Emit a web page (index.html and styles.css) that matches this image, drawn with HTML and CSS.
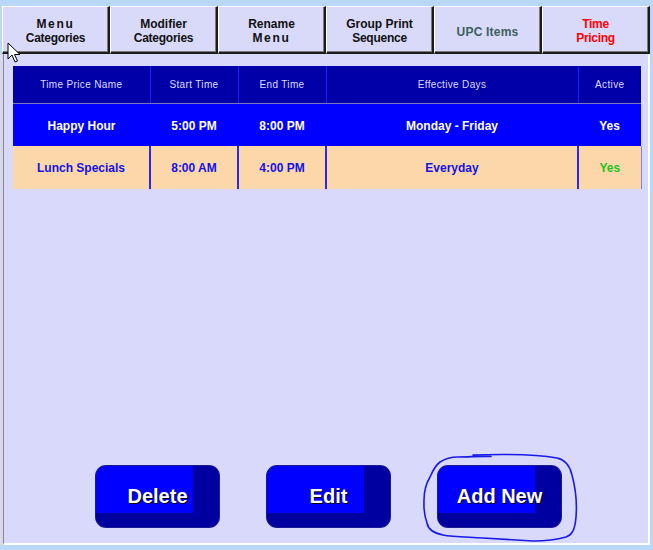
FILE: index.html
```html
<!DOCTYPE html>
<html>
<head>
<meta charset="utf-8">
<link rel="stylesheet" href="styles.css">
</head>
<body>
<div class="app">
  <div class="tabs">
    <div class="tab"><span class="wide">Menu</span><span class="tight">Categories</span></div>
    <div class="tab"><span>Modifier</span><span class="tight">Categories</span></div>
    <div class="tab"><span>Rename</span><span class="wide">Menu</span></div>
    <div class="tab"><span>Group Print</span><span class="tight">Sequence</span></div>
    <div class="tab upc"><span>UPC Items</span></div>
    <div class="tab active"><span>Time</span><span>Pricing</span></div>
  </div>
  <div class="panel-wrap">
    <div class="panel">
      <table class="grid">
        <colgroup>
          <col class="c1"><col class="c2"><col class="c3"><col class="c4"><col class="c5">
        </colgroup>
        <thead>
          <tr>
            <th>Time Price Name</th>
            <th>Start Time</th>
            <th>End Time</th>
            <th>Effective Days</th>
            <th>Active</th>
          </tr>
        </thead>
        <tbody>
          <tr class="sel">
            <td>Happy Hour</td>
            <td>5:00 PM</td>
            <td>8:00 PM</td>
            <td>Monday - Friday</td>
            <td>Yes</td>
          </tr>
          <tr class="norm">
            <td>Lunch Specials</td>
            <td>8:00 AM</td>
            <td>4:00 PM</td>
            <td>Everyday</td>
            <td class="yes">Yes</td>
          </tr>
        </tbody>
      </table>
      <div class="actions">
        <button class="btn">Delete</button>
        <button class="btn">Edit</button>
        <button class="btn">Add New</button>
      </div>
    </div>
  </div>
  <svg class="cursor" width="14" height="22" viewBox="0 0 14 22">
    <path d="M1 1 L1 17 L5 13 L8 20 L10.5 19 L7.5 12.5 L13 12.5 Z" fill="#ffffff" stroke="#000000" stroke-width="1" stroke-linejoin="miter"/>
  </svg>
  <svg class="scribble" width="653" height="550" viewBox="0 0 653 550">
    <path d="M473 455 C 505 454, 540 455, 557 458 C 566 460, 570 466, 572 475 C 576 490, 577 505, 576 517 C 575 530, 572 535, 566 537 C 552 541, 540 541, 533 541 C 515 540, 498 539, 483 538 C 468 537, 453 537, 443 535 C 433 533, 428 529, 427 523 C 423 512, 424 505, 424 500 C 424 490, 427 482, 430 477 C 433 470, 436 465, 440 462 C 446 458, 452 457, 458 457 C 470 457, 480 456, 491 456.5" fill="none" stroke="#1a1ae6" stroke-width="1.6" stroke-linecap="round"/>
  </svg>
</div>
</body>
</html>
```

FILE: styles.css
```css
* { box-sizing: border-box; }
html, body { margin: 0; padding: 0; }
body {
  background: #b9d8f8;
  width: 653px;
  height: 550px;
  overflow: hidden;
  font-family: "Liberation Sans", Arial, sans-serif;
}
.app {
  position: relative;
  width: 653px;
  height: 550px;
  padding-top: 6px;
}
.tabs {
  display: grid;
  grid-template-columns: repeat(6, 108px);
  margin-left: 2px;
  height: 48px;
}
.tab {
  display: flex;
  flex-direction: column;
  align-items: center;
  justify-content: center;
  background: #d9d9f9;
  border-style: solid;
  border-width: 1px 2px 2px 1px;
  border-color: #ffffff #1c1c1c #1c1c1c #ffffff;
  box-shadow: inset -1px -1px 0 #7a7a7a;
  font-size: 12px;
  font-weight: bold;
  line-height: 14px;
  color: #111111;
  padding-top: 3px;
}
.tab .wide { letter-spacing: 1.7px; }
.tab .tight { letter-spacing: -0.25px; }
.tab.upc {
  color: #3b6060;
  letter-spacing: 0.2px;
  padding-top: 4px;
}
.tab.active { color: #ff0000; letter-spacing: -0.3px; }

.panel-wrap {
  background: #d8d8f2;
  padding-left: 3px;
  width: 650px;
  height: 491px;
}
.panel {
  display: flex;
  flex-direction: column;
  width: 647px;
  height: 491px;
  background: #d9d9fb;
  border-left: 1px solid #8a8a80;
  border-right: 2px solid #ffffff;
  border-bottom: 2px solid #ffffff;
  padding: 12px 0 16px 9px;
}
.grid {
  border-collapse: collapse;
  table-layout: fixed;
  width: 628px;
}
.c1 { width: 137px; }
.c2 { width: 88px; }
.c3 { width: 88px; }
.c4 { width: 252px; }
.c5 { width: 63px; }
.grid th {
  height: 37px;
  background: #0000a8;
  color: #dcdcff;
  font-size: 10px;
  font-weight: normal;
  letter-spacing: 0.35px;
  text-align: center;
  padding: 0;
  border-left: 1px solid #1c1cff;
  border-bottom: 1px solid #7878b8;
}
.grid th:first-child { border-left: none; }
.grid td {
  height: 43px;
  text-align: center;
  font-size: 12px;
  font-weight: bold;
  padding: 0;
}
.sel td {
  background: #0000ff;
  color: #ffffff;
  padding-top: 2px;
}
.norm td {
  background: #fcd7a9;
  color: #1212e8;
  border-left: 2px solid #2a2aee;
}
.norm td:first-child { border-left: none; }
.norm td:last-child { border-right: 1px solid #8080f0; }
.norm td.yes { color: #22c422; }

.actions {
  margin-top: auto;
  display: flex;
  gap: 48px;
  padding-left: 83px;
}
.btn {
  width: 123px;
  height: 61px;
  border: none;
  border-radius: 10px;
  background:
    linear-gradient(#0000ff, #0000ff) 0 0 / calc(100% - 26px) calc(100% - 14px) no-repeat,
    #0000a0;
  color: #ffffff;
  font-family: "Liberation Sans", Arial, sans-serif;
  font-size: 20px;
  font-weight: bold;
  text-shadow: 1px 1px 0 #000000;
  padding: 0;
  box-shadow: 0 0 0 1px #1a1a90;
}
.cursor {
  position: absolute;
  left: 7px;
  top: 42px;
}
.scribble {
  position: absolute;
  left: 0;
  top: 0;
  pointer-events: none;
}
```
